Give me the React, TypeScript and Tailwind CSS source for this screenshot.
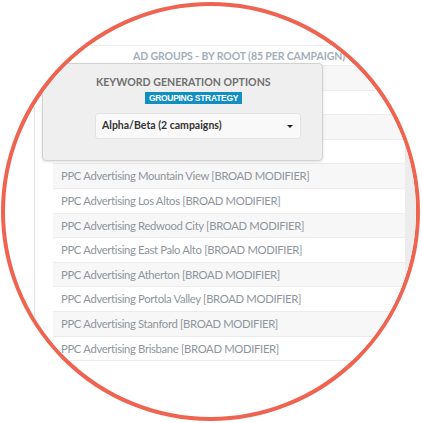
const rows = [
  "Palo Alto",
  "Menlo Park",
  "Sunnyvale",
  "Cupertino",
  "Mountain View",
  "Los Altos",
  "Redwood City",
  "East Palo Alto",
  "Atherton",
  "Portola Valley",
  "Stanford",
  "Brisbane",
];

function AdGroupsTable() {
  return (
    <div className="w-[352px] shrink-0 mt-[39px] font-['Lato',sans-serif]">
      <div className="h-[21px] border-y border-[#ececec] bg-white pl-[20px] text-center text-[10.5px] font-bold leading-[20px] text-[#a3afbb] tracking-[-0.1px] whitespace-nowrap">
        AD GROUPS - BY ROOT (85 PER CAMPAIGN)
      </div>
      {rows.map((city, i) => (
        <div
          key={city}
          className={`h-[24.6px] border-b border-[#ececec] pl-[8px] text-[11.3px] leading-[24px] text-[#8f969d] tracking-[-0.35px] whitespace-nowrap ${
            i % 2 === 0 ? "bg-[#f7f7f7]" : "bg-white"
          }`}
        >
          PPC Advertising {city} [BROAD MODIFIER]
        </div>
      ))}
    </div>
  );
}

function OptionsPopup() {
  return (
    <div className="absolute left-[37px] top-[57px] w-[281px] h-[98px] rounded-[4px] border border-[#d2d2d2] bg-[#efefef] shadow-[0_1px_3px_rgba(0,0,0,0.12)] flex flex-col items-start font-['Lato',sans-serif]">
      <div className="mt-[11px] ml-[53px] text-[10.6px] font-bold leading-[14px] text-[#707070]">
        KEYWORD GENERATION OPTIONS
      </div>
      <div className="mt-[3px] ml-[102px] h-[12px] w-[97px] flex items-center justify-center bg-[#118ec2] text-[8.5px] font-bold leading-[12px] text-white font-['Liberation_Sans',sans-serif] tracking-[-0.3px]">
        GROUPING STRATEGY
      </div>
      <div className="mt-[9px] ml-[52px] w-[206px] h-[26px] rounded-[3px] border border-[#e2e2e2] bg-[#f9f9f9] flex items-center justify-between px-[6px]">
        <span className="text-[10.5px] font-bold text-[#333]">Alpha/Beta (2 campaigns)</span>
        <span className="w-0 h-0 border-x-[3px] border-x-transparent border-t-[3px] border-t-[#222] mr-[1px]" />
      </div>
    </div>
  );
}

export default function App() {
  return (
    <div className="w-[422px] h-[423px] bg-white">
      <div className="relative ml-[1px] mt-[2px] w-[419px] h-[419px] rounded-full border-4 border-[#ef6451] overflow-hidden bg-white">
        <div className="flex h-full">
          <div className="w-[29px] shrink-0" />
          <div className="w-[19px] shrink-0 border-l border-[#e4e4e4]" />
          <AdGroupsTable />
          <div className="flex-1 min-w-0 bg-[#ececec]" />
        </div>
        <OptionsPopup />
      </div>
    </div>
  );
}
